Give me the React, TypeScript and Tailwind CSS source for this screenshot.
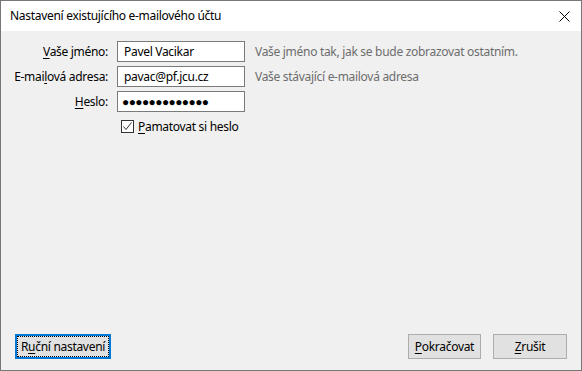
const font = { fontFamily: '"Noto Sans", "Open Sans", sans-serif' };

const Key = ({ children }: { children: string }) => <span className="underline underline-offset-2">{children}</span>;

export default function App() {
  return (
    <div
      className="w-[582px] h-[371px] flex flex-col border border-[#777777] bg-[#f0f0f0] text-[12px] tracking-[-0.3px] text-black"
      style={font}
    >
      <div className="h-[30px] bg-white flex items-center justify-between pl-[9px] pr-[10px]">
        <span>Nastavení existujícího e-mailového účtu</span>
        <svg width="11" height="11" viewBox="0 0 11 11" className="mr-[1px]">
          <path d="M0.5 0.5 L10.5 10.5 M10.5 0.5 L0.5 10.5" stroke="#000" strokeWidth="1" />
        </svg>
      </div>

      <div className="flex-1 flex flex-col pt-[10px]">
        <div className="grid grid-cols-[107px_128px_auto] gap-x-[9px] gap-y-[4px] items-center">
          <label className="text-right">
            <Key>V</Key>aše jméno:
          </label>
          <div className="h-[21px] bg-white border border-[#7a7a7a] flex items-center px-[6px]">Pavel Vacikar</div>
          <span className="pl-[1px] text-[#6d6d6d]">Vaše jméno tak, jak se bude zobrazovat ostatním.</span>

          <label className="text-right">
            E-mai<Key>l</Key>ová adresa:
          </label>
          <div className="h-[21px] bg-white border border-[#7a7a7a] flex items-center px-[6px]">pavac@pf.jcu.cz</div>
          <span className="pl-[1px] text-[#6d6d6d]">Vaše stávající e-mailová adresa</span>

          <label className="text-right">
            <Key>H</Key>eslo:
          </label>
          <div className="h-[21px] bg-white border border-[#7a7a7a] flex items-center px-[4px] text-[12px] tracking-[-0.6px]">
            ●●●●●●●●●●●●●
          </div>
          <span />

          <span />
          <div className="h-[21px] flex items-center gap-[4px] col-span-2 ml-[4px]">
            <span className="size-[13px] border border-[#333333] bg-white flex items-center justify-center">
              <svg width="11" height="11" viewBox="0 0 11 11" fill="none">
                <path d="M1.5 5.5 L4 8.5 L9.5 1.5" stroke="#333" strokeWidth="1" />
              </svg>
            </span>
            <span>
              <Key>P</Key>amatovat si heslo
            </span>
          </div>
        </div>

        <div className="mt-auto flex items-center pl-[14px] pr-[14px] pb-[11px]">
          <button className="h-[25px] w-[96px] border-2 border-[#0078d7] bg-[#e1e1e1] p-0">
            <div className="h-full w-full border border-dotted border-black flex items-center justify-center">
              <span>
                R<Key>u</Key>ční nastavení
              </span>
            </div>
          </button>
          <div className="ml-auto flex gap-[12px]">
            <button className="h-[25px] w-[73px] border border-[#adadad] bg-[#e1e1e1] flex items-center justify-center">
              <span>
                <Key>P</Key>okračovat
              </span>
            </button>
            <button className="h-[25px] w-[74px] border border-[#adadad] bg-[#e1e1e1] flex items-center justify-center">
              <span>
                <Key>Z</Key>rušit
              </span>
            </button>
          </div>
        </div>
      </div>
    </div>
  );
}
